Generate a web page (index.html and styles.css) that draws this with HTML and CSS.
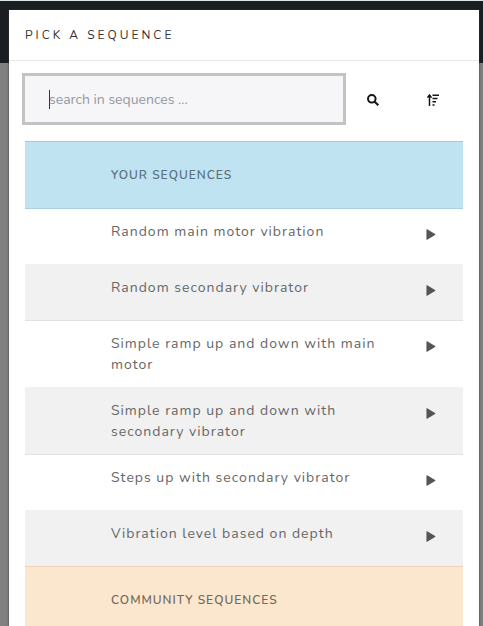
FILE: index.html
```html
<!DOCTYPE html>
<html lang="en">
<head>
<meta charset="utf-8">
<meta name="viewport" content="width=device-width, initial-scale=1">
<title>Pick a sequence</title>
<link rel="stylesheet" href="styles.css">
</head>
<body>
<svg class="sprite">
  <symbol id="play" viewBox="0 0 10 12"><path d="M0 .7Q0 0 .800 .4L9.500 5.400Q10 6 9.500 6.600L.800 11.600Q0 12 0 11.300Z"/></symbol>
</svg>
<main class="modal" role="dialog" aria-labelledby="title">
  <header class="modal-header"><h1 id="title">PICK A SEQUENCE</h1></header>
  <div class="modal-body">
    <form class="search">
      <input class="search-input" type="text" placeholder="search in sequences ..." aria-label="Search in sequences">
      <button class="icon-button" type="button" aria-label="Search">
        <svg width="12" height="12" viewBox="0 0 12 12"><circle cx="4.800" cy="4.800" r="3.800"/><path d="M7.700 7.700L11.300 11.300"/></svg>
      </button>
      <button class="icon-button" type="button" aria-label="Sort">
        <svg width="12" height="12" viewBox="0 0 12 12"><path class="sort" d="M2.500 12V2M.4 3.600L2.500 1L4.600 3.600M5.500 1.300H12M5.500 4.500H10.500M5.500 7.700H9M5.500 10.900H7.500"/></svg>
      </button>
    </form>
    <table class="sequences">
      <colgroup><col class="col-lead"><col><col class="col-action"></colgroup>
      <tbody>
        <tr class="group yours"><td></td><th scope="rowgroup" colspan="2">YOUR SEQUENCES</th></tr>
        <tr><td></td><td>Random main motor vibration</td><td class="action"><button class="play" type="button" aria-label="Play"><svg><use href="#play"/></svg></button></td></tr>
        <tr class="shaded"><td></td><td>Random secondary vibrator</td><td class="action"><button class="play" type="button" aria-label="Play"><svg><use href="#play"/></svg></button></td></tr>
        <tr><td></td><td>Simple ramp up and down with main motor</td><td class="action"><button class="play" type="button" aria-label="Play"><svg><use href="#play"/></svg></button></td></tr>
        <tr class="shaded"><td></td><td>Simple ramp up and down with secondary vibrator</td><td class="action"><button class="play" type="button" aria-label="Play"><svg><use href="#play"/></svg></button></td></tr>
        <tr><td></td><td>Steps up with secondary vibrator</td><td class="action"><button class="play" type="button" aria-label="Play"><svg><use href="#play"/></svg></button></td></tr>
        <tr class="shaded"><td></td><td>Vibration level based on depth</td><td class="action"><button class="play" type="button" aria-label="Play"><svg><use href="#play"/></svg></button></td></tr>
      </tbody>
      <tbody>
        <tr class="group community"><td></td><th scope="rowgroup" colspan="2">COMMUNITY SEQUENCES</th></tr>
      </tbody>
    </table>
  </div>
</main>
</body>
</html>
```
FILE: styles.css
```css
* {
  box-sizing: border-box;
}

html {
  height: 100%;
  overflow: hidden;
}

body {
  height: 100%;
  margin: 0;
  padding: 10px 4px 0 9px;
  overflow: hidden;
  background: linear-gradient(#dde5e5 0 1px, #1a1e20 1px 63px, #808080 63px);
  font-family: Nunito, Lato, "Open Sans", sans-serif;
  font-size: 14px;
  line-height: 21px;
  color: #666;
}

.sprite {
  display: none;
}

.modal {
  min-height: 100%;
  background: #fff;
  box-shadow: 0 0 2px #333;
}

.modal-header {
  padding: 15px 16px 14px;
  border-bottom: 1px solid #e8e8e8;
}

h1 {
  margin: 0;
  font-size: 12px;
  font-weight: 400;
  letter-spacing: 3px;
  color: #333;
}

.modal-body {
  padding: 12px 16px 0 13px;
}

.search {
  display: flex;
  align-items: center;
  margin-bottom: 16px;
}

.search-input {
  flex: 1;
  min-width: 0;
  height: 52px;
  padding: 0 24px;
  border: 3px solid #c3c3c3;
  background: linear-gradient(#333, #333) 24px center / 1px 19px no-repeat #f6f6f9;
  font: inherit;
  outline: 0;
}

.search-input::placeholder {
  color: #9498a0;
  opacity: 1;
}

.icon-button {
  display: grid;
  flex: none;
  place-items: center;
  width: 54px;
  height: 54px;
  margin-bottom: -2px;
  padding: 0;
  border: 0;
  background: none;
}

.icon-button:last-of-type {
  width: 66px;
  margin-right: -3px;
}

.icon-button svg {
  fill: none;
  stroke: #151515;
  stroke-width: 2;
}

.icon-button .sort {
  stroke-width: 1.5;
}

.sequences {
  width: calc(100% - 3px);
  margin-left: 3px;
  border-collapse: separate;
  border-spacing: 0;
  table-layout: fixed;
  letter-spacing: 1px;
}

.col-lead {
  width: 74px;
}

.col-action {
  width: 49px;
}

tr {
  height: 56px;
}

td,
th {
  padding: 12px;
  border-bottom: 1px solid #f1f1f1;
  vertical-align: top;
  text-align: left;
}

.shaded {
  background: #f1f1f1;
}

.shaded td {
  border-bottom-color: #e1e1e1;
}

.shaded:last-child td {
  border-bottom-color: #ead3b8;
}

.group {
  height: 68px;
}

.group th {
  vertical-align: middle;
  font-size: 12px;
  font-weight: 600;
}

.yours {
  background: #bfe3f1;
  color: #5a707c;
}

.yours td,
.yours th {
  border-top: 1px solid #9bc9da;
  border-bottom: 1px solid #a8d0de;
}

.community {
  background: #fbe7cd;
  color: #736a5e;
}

.sequences .action {
  padding: 12px 0 0 12px;
}

.play {
  display: flex;
  align-items: center;
  height: 27px;
  padding: 0;
  border: 0;
  background: none;
}

.play svg {
  width: 10px;
  height: 11px;
  fill: #555;
}
```
